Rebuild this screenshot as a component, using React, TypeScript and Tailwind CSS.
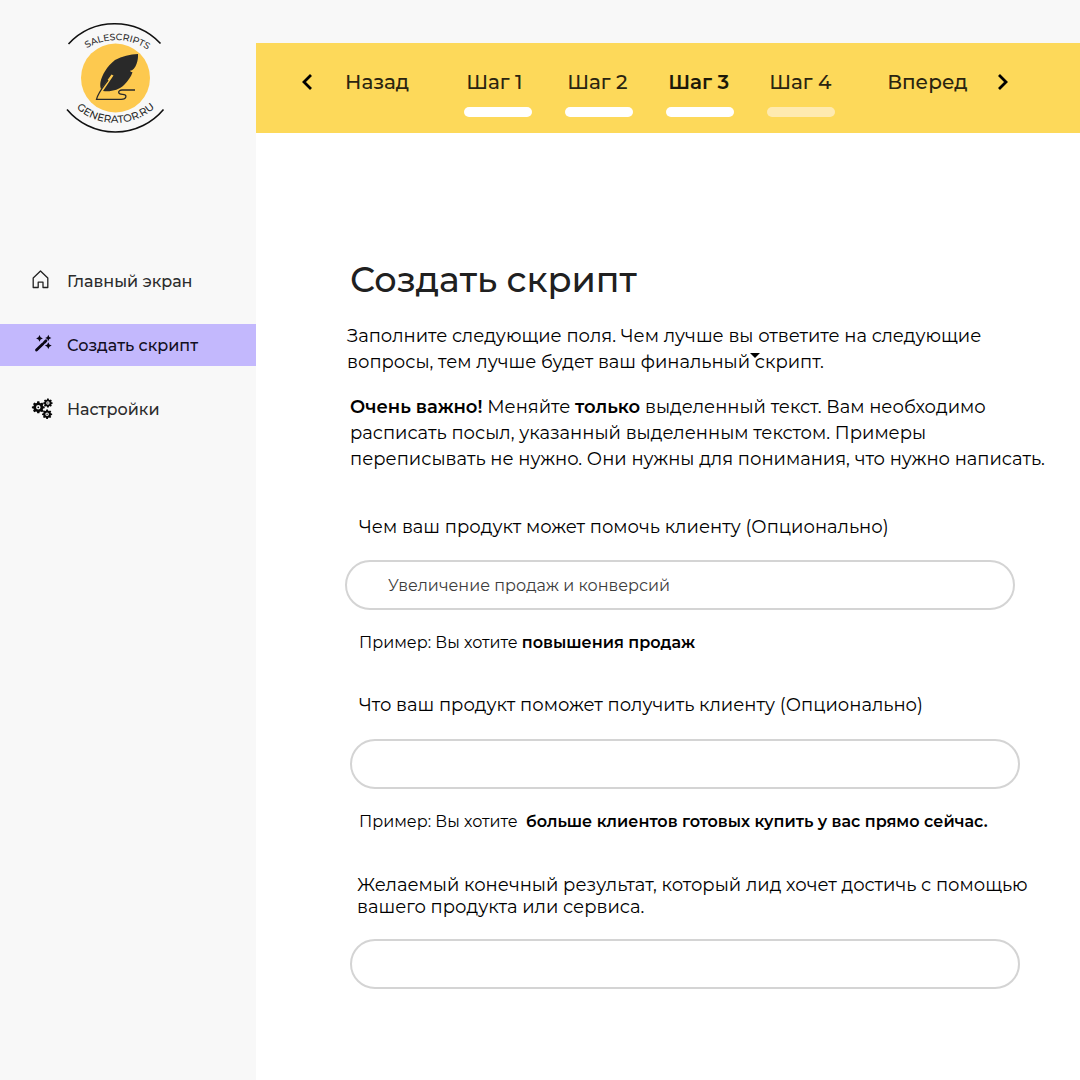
import { ReactNode } from "react";

const GEAR =
  "M-1.6-9h3.2l.5 2.3 1.700.7 2-1.300 2.200 2.200-1.300 2 .7 1.500 2.300.5v2.400l-2.300.5-.7 1.500 1.300 2-2.200 2.200-2-1.300-1.700.7-.5 2.300h-3.200l-.5-2.300-1.700-.7-2 1.300-2.200-2.200 1.300-2-.7-1.500-2.300-.5v-2.400l2.300-.5.7-1.500-1.300-2 2.200-2.200 2 1.300 1.700-.7zM0-3.400a3.400 3.400 0 1 0 0 6.800a3.400 3.400 0 1 0 0-6.800zM0-1.300a1.300 1.300 0 1 0 0 2.600a1.300 1.300 0 1 0 0-2.600z";

function Logo() {
  return (
    <svg viewBox="0 0 100 112" className="h-28 w-25 overflow-visible" role="img" aria-label="SalesScripts Generator.ru">
      <defs>
        <path id="logo-top" d="M11 36A56 56 0 0 1 93 38" />
        <path id="logo-bottom" d="M4 79.500A59 59 0 0 0 97 79" />
      </defs>
      <circle cx="50.500" cy="57" r="34.500" fill="#fdc94f" />
      <path d="M3.500 23A63 63 0 0 1 95.500 22.500M2 88.500A63 63 0 0 0 98.500 88.500" fill="none" stroke="#111" strokeWidth="1.600" />
      <text fontSize="9.300" fontFamily="Montserrat, sans-serif" fontWeight="500" fill="#2a2a2a">
        <textPath href="#logo-top" startOffset="50%" textAnchor="middle">
          SALESCRIPTS
        </textPath>
      </text>
      <text fontSize="10.400" fontFamily="Montserrat, sans-serif" fontWeight="500" fill="#2a2a2a">
        <textPath href="#logo-bottom" startOffset="50%" textAnchor="middle">
          GENERATOR.RU
        </textPath>
      </text>
      <path
        d="M73 33C65 33.500 57 35 50 39C42 45 37 54 35.500 61C35 64 35.300 66 36 68L46.500 53.500L48.500 54.500L38 70C46 71 54 69 59 64C63 60 66 56 67.500 51.300C66 51 65.500 50.500 65 49.700C68 49.500 70 47 71.500 43C72.800 40 73.200 36 73 33Z"
        fill="#292929"
      />
      <path
        d="M43 59C38 66 33 72 31.500 78.300H56C62 78.300 62.500 73.300 57.500 73.300C52.500 73.300 52.500 69 57 69H70"
        fill="none"
        stroke="#292929"
        strokeWidth="1.300"
      />
    </svg>
  );
}

function HomeIcon() {
  return (
    <svg viewBox="0 0 20 20" className="size-5" fill="none" stroke="#222" strokeWidth="1.300" strokeLinejoin="round" aria-hidden="true">
      <path d="M1.200 8L8.500 1L15.800 8V17.500H11V12.200H6.200V17.500H1.200Z" />
    </svg>
  );
}

function WandIcon() {
  return (
    <svg viewBox="0 0 20 20" className="size-5" fill="#0a0614" aria-hidden="true">
      <path d="M4.500 16L11 9.700M12.300 8.500L14 6.800" stroke="#0a0614" strokeWidth="2.800" strokeLinecap="round" fill="none" />
      <path d="M7.500 1l1.100 2.300 2.300 1.100-2.300 1.100-1.100 2.300-1.100-2.300-2.300-1.100 2.300-1.100z" />
      <path d="M16.300.8l1 2.100 2.100 1-2.100 1-1 2.100-1-2.100-2.100-1 2.100-1z" />
      <path d="M16.300 8.200l1.100 2.300 2.300 1.100-2.300 1.100-1.100 2.300-1.100-2.300-2.300-1.100 2.300-1.100z" />
    </svg>
  );
}

function GearsIcon() {
  return (
    <svg viewBox="0 0 20 20" className="size-5 overflow-visible" fill="#080808" fillRule="evenodd" aria-hidden="true">
      <path d={GEAR} transform="translate(6.300 9.300) scale(.66)" />
      <path d={GEAR} transform="translate(15.900 5) scale(.49)" />
      <path d={GEAR} transform="translate(15.100 16.200) scale(.52)" />
    </svg>
  );
}

function Chevron({ d }: { d: string }) {
  return (
    <svg viewBox="0 0 16 16" className="size-4" fill="none" stroke="#000" strokeWidth="2.800" aria-hidden="true">
      <path d={d} />
    </svg>
  );
}

function NavItem({ icon, label, active }: { icon: ReactNode; label: string; active?: boolean }) {
  return (
    <a
      href="#"
      aria-current={active ? "page" : undefined}
      className={`flex h-[42px] items-center gap-[15px] pt-0.5 pl-8 text-base font-medium ${active ? "bg-[#c3b8fd] text-[#120e22]" : "text-[#2c2c2c]"}`}
    >
      <span className="-mt-1">{icon}</span>
      {label}
    </a>
  );
}

const steps = [
  { label: "Шаг 1", done: true },
  { label: "Шаг 2", done: true },
  { label: "Шаг 3", done: true, current: true },
  { label: "Шаг 4", done: false },
];

const inputStyle =
  "h-[50px] w-full rounded-full border-2 border-[#d4d4d4] bg-white px-[41px] text-base text-[#3c3c3c] outline-none";

export default function App() {
  return (
    <div className="flex min-h-screen bg-white font-['Montserrat','Inter',sans-serif] text-black">
      <aside className="w-64 shrink-0 bg-[#f8f8f8]">
        <div className="pt-[21px] pl-[65px]">
          <Logo />
        </div>
        <nav className="mt-[127px] flex flex-col gap-[22px]">
          <NavItem icon={<HomeIcon />} label="Главный экран" />
          <NavItem icon={<WandIcon />} label="Создать скрипт" active />
          <NavItem icon={<GearsIcon />} label="Настройки" />
        </nav>
      </aside>

      <div className="min-w-0 flex-1">
        <header className="border-t-[43px] border-[#f8f8f8]">
          <div className="flex h-[90px] items-start bg-[#fdd95a] pt-6 pl-11 text-xl leading-[30px] font-medium text-[#2a2410]">
            <button className="flex items-center gap-[29px]">
              <Chevron d="M11 1L4 8L11 15" />
              Назад
            </button>
            <ol className="ml-[55px] flex gap-[33px]">
              {steps.map((s) => (
                <li key={s.label} className="w-[68px]">
                  <a
                    href="#"
                    aria-current={s.current ? "step" : undefined}
                    className={`block pl-0.5 whitespace-nowrap ${s.current ? "font-semibold text-[#1c1808]" : ""}`}
                  >
                    {s.label}
                  </a>
                  <div className={`mt-2.5 h-2.5 rounded-full ${s.done ? "bg-white" : "bg-[#feeab0]"}`} />
                </li>
              ))}
            </ol>
            <button className="ml-[52px] flex items-center gap-[26px]">
              Вперед
              <Chevron d="M5 1L12 8L5 15" />
            </button>
          </div>
        </header>

        <main className="pt-[123px] pr-[30px] pb-20 pl-[89px]">
          <h1 className="ml-[5px] text-[35px] leading-[48px] font-medium text-[#202020]">Создать скрипт</h1>
          <p className="mt-[19px] ml-0.5 text-lg leading-[26px]">
            Заполните следующие поля. Чем лучше вы ответите на следующие
            <br />
            вопросы, тем лучше будет ваш финальный
            <span className="relative">
              <span className="absolute top-0.5 left-0 border-x-[5px] border-t-[5px] border-x-transparent border-t-black" />
            </span>{" "}
            скрипт.
          </p>
          <p className="mt-[19px] ml-[5px] text-lg leading-[26px]">
            <strong className="font-semibold">Очень важно!</strong> Меняйте{" "}
            <strong className="font-semibold">только</strong> выделенный текст. Вам необходимо
            <br />
            расписать посыл, указанный выделенным текстом. Примеры
            <br />
            переписывать не нужно. Они нужны для понимания, что нужно написать.
          </p>

          <form className="mt-[42px]">
            <label htmlFor="help" className="ml-3.5 block text-lg leading-[26px]">
              Чем ваш продукт может помочь клиенту (Опционально)
            </label>
            <div className="mt-5 pr-[35px]">
              <input id="help" defaultValue="Увеличение продаж и конверсий" className={inputStyle} />
            </div>
            <p className="mt-5 ml-3.5 text-base leading-[26px]">
              Пример: Вы хотите <strong className="font-semibold">повышения продаж</strong>
            </p>

            <label htmlFor="gain" className="mt-9 ml-3.5 block text-lg leading-[26px]">
              Что ваш продукт поможет получить клиенту (Опционально)
            </label>
            <div className="mt-[21px] pr-[30px] pl-[5px]">
              <input id="gain" className={inputStyle} />
            </div>
            <p className="mt-5 ml-3.5 text-base leading-[26px]">
              Пример: Вы хотите&nbsp;{" "}
              <strong className="font-semibold">больше клиентов готовых купить у вас прямо сейчас.</strong>
            </p>

            <label htmlFor="result" className="mt-[39px] ml-3 block text-lg leading-[22px]">
              Желаемый конечный результат, который лид хочет достичь с помощью
              <br />
              вашего продукта или сервиса.
            </label>
            <div className="mt-[21px] pr-[30px] pl-[5px]">
              <input id="result" className={inputStyle} />
            </div>
          </form>
        </main>
      </div>
    </div>
  );
}
